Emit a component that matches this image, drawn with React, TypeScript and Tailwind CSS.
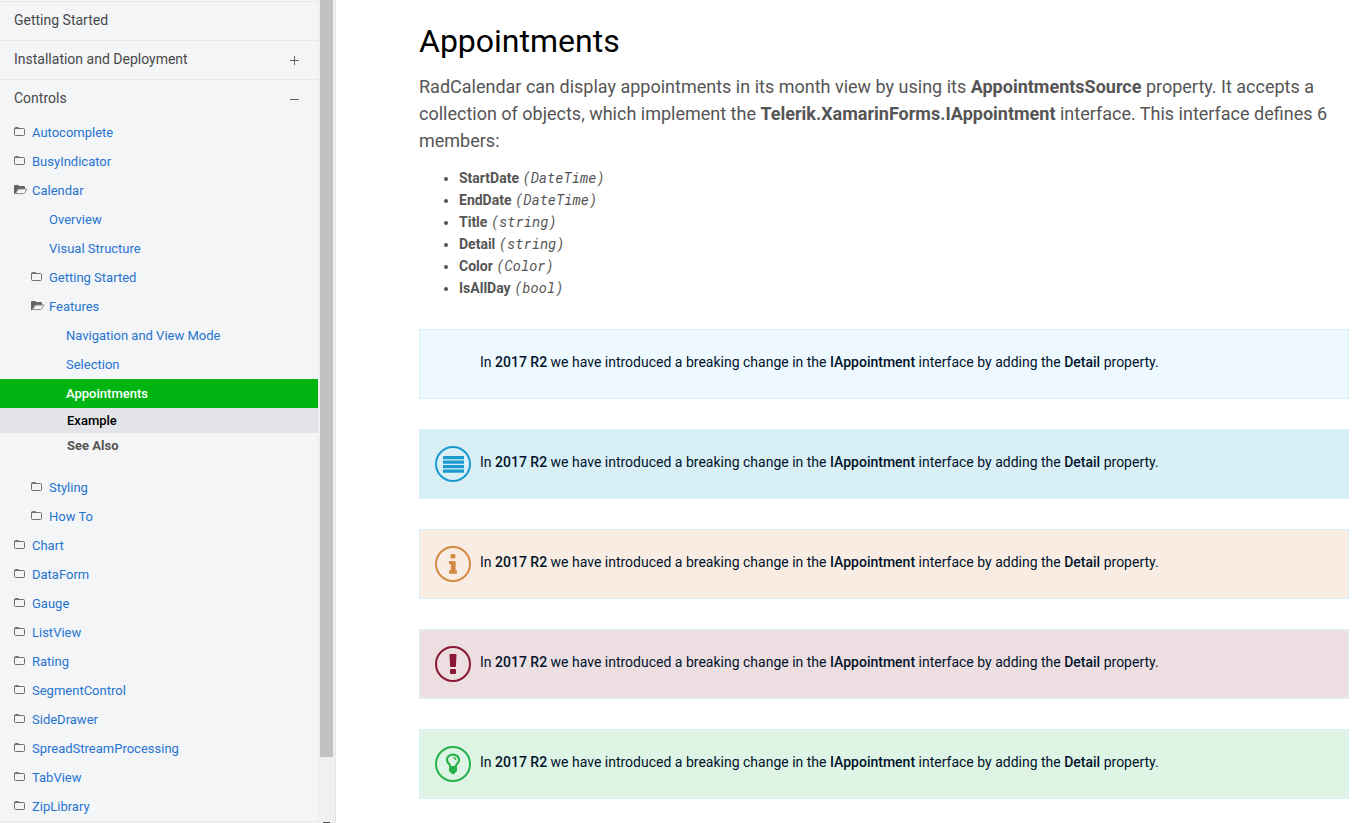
import type { ReactNode } from "react";

type Item = { label: string; level: 0 | 1 | 2; icon?: "closed" | "open"; active?: boolean };

const before: Item[] = [
  { label: "Autocomplete", level: 0, icon: "closed" },
  { label: "BusyIndicator", level: 0, icon: "closed" },
  { label: "Calendar", level: 0, icon: "open" },
  { label: "Overview", level: 1 },
  { label: "Visual Structure", level: 1 },
  { label: "Getting Started", level: 1, icon: "closed" },
  { label: "Features", level: 1, icon: "open" },
  { label: "Navigation and View Mode", level: 2 },
  { label: "Selection", level: 2 },
  { label: "Appointments", level: 2, active: true },
];

const after: Item[] = [
  { label: "Styling", level: 1, icon: "closed" },
  { label: "How To", level: 1, icon: "closed" },
  { label: "Chart", level: 0, icon: "closed" },
  { label: "DataForm", level: 0, icon: "closed" },
  { label: "Gauge", level: 0, icon: "closed" },
  { label: "ListView", level: 0, icon: "closed" },
  { label: "Rating", level: 0, icon: "closed" },
  { label: "SegmentControl", level: 0, icon: "closed" },
  { label: "SideDrawer", level: 0, icon: "closed" },
  { label: "SpreadStreamProcessing", level: 0, icon: "closed" },
  { label: "TabView", level: 0, icon: "closed" },
  { label: "ZipLibrary", level: 0, icon: "closed" },
];

const members = [
  ["StartDate", "DateTime"],
  ["EndDate", "DateTime"],
  ["Title", "string"],
  ["Detail", "string"],
  ["Color", "Color"],
  ["IsAllDay", "bool"],
];

const indent = { 0: "pl-[14px]", 1: "pl-[31px]", 2: "pl-[48px]" };

function FolderIcon({ open }: { open: boolean }) {
  return (
    <svg width="14" height="10" viewBox="0 0 14 10" aria-hidden="true" className="mb-0.5">
      {open ? (
        <>
          <path d="M0 8.5V1Q0 0 1 0h3.2l1 1H10q1 0 1 1v2H5Q4 4 3.5 4.800L.8 9.200Q0 9.200 0 8.500z" fill="#656565" />
          <path d="M4.600 4H13L10.600 8q-.4.6-1 .6H1.600z" fill="none" stroke="#858585" strokeWidth=".9" strokeLinejoin="round" />
        </>
      ) : (
        <path
          d="M.5 1.5q0-1 1-1h2.7q.6 0 .8 1h4.5q1 0 1 1v5q0 1-1 1h-8q-1 0-1-1zM.5 1.5H5"
          fill="none"
          stroke="#707070"
        />
      )}
    </svg>
  );
}

function NavItem({ item }: { item: Item }) {
  return (
    <li>
      <a
        href="#"
        className={`flex h-[29px] items-center ${indent[item.level]} ${
          item.active ? "bg-[#00b412] font-medium text-white" : "text-[#2774d0]"
        }`}
      >
        <span className="w-[18px] shrink-0">{item.icon && <FolderIcon open={item.icon === "open"} />}</span>
        {item.label}
      </a>
    </li>
  );
}

function Section({ label, sign }: { label: string; sign?: "plus" | "minus" }) {
  return (
    <button
      type="button"
      className="flex h-[39px] w-full items-center justify-between border-t border-[#e4e7eb] pr-[19px] pb-0.5 pl-[14px] text-left text-sm text-[#494949]"
    >
      {label}
      {sign && (
        <svg width="9" height="9" viewBox="0 0 9 9" aria-hidden="true" className="mt-0.5 overflow-visible">
          <path d={sign === "plus" ? "M0 4.5h9M4.5 0v9" : "M0 4.5h9"} stroke="#5f5f5f" fill="none" />
        </svg>
      )}
    </button>
  );
}

function Ring({ color, children }: { color: string; children: ReactNode }) {
  return (
    <svg width="36" height="36" viewBox="0 0 36 36" fill={color} aria-hidden="true">
      <circle cx="18" cy="18" r="17" fill="none" stroke={color} strokeWidth="2" />
      {children}
    </svg>
  );
}

const notes: { tone: string; icon: ReactNode }[] = [
  { tone: "bg-[#edf8ff]", icon: null },
  {
    tone: "bg-[#d9eff6]",
    icon: (
      <Ring color="#1c9ad0">
        <rect x="8" y="10" width="21" height="3.3" rx=".5" />
        <rect x="8" y="14.5" width="21" height="3.3" rx=".5" />
        <rect x="8" y="19" width="21" height="3.3" rx=".5" />
        <rect x="8" y="23.5" width="21" height="3.3" rx=".5" />
      </Ring>
    ),
  },
  {
    tone: "bg-[#f9ede3]",
    icon: (
      <Ring color="#d28a44">
        <rect x="15.5" y="8" width="5" height="4.5" rx="1.5" />
        <path d="M14.7 15h5.1q.8 0 .8.8v8.4h.6q.8 0 .8.8v2q0 .8-.8.8h-6.4q-.8 0-.8-.8v-2q0-.8.8-.8h1v-6h-1.1q-.7 0-.7-.8v-1.6q0-.8.7-.8z" />
      </Ring>
    ),
  },
  {
    tone: "bg-[#eddee1]",
    icon: (
      <Ring color="#8a1735">
        <path d="M15.3 8h5.4q.9 0 .8.9l-.6 11.3q0 .8-.8.8h-4.2q-.8 0-.8-.8l-.6-11.3q-.1-.9.8-.9z" />
        <rect x="15" y="23" width="6" height="5" rx="1" />
      </Ring>
    ),
  },
  {
    tone: "bg-[#def4e4]",
    icon: (
      <Ring color="#28b24b">
        <path
          d="M15.5 21c0-2.8-3.6-4-3.6-7.2a6.1 5.2 0 0 1 12.2 0c0 3.2-3.6 4.4-3.6 7.2z"
          fill="none"
          stroke="#28b24b"
          strokeWidth="2.2"
        />
        <path d="M18.3 11.5q2.2.3 2.6 2.3" fill="none" stroke="#28b24b" strokeWidth="1.4" />
        <path d="M14 20.5h8v4.5l-1.8 1.8q-.4 1.4-2.2 1.4t-2.2-1.4L14 25z" />
      </Ring>
    ),
  },
];

export default function App() {
  return (
    <div className="flex h-screen overflow-hidden bg-white font-['Roboto',sans-serif] text-[#555]">
      <aside className="flex w-[336px] shrink-0 border-r border-[#e4e7eb] bg-[#f3f5f7]">
        <nav className="min-w-0 flex-1 pt-px text-[13px]" aria-label="Documentation">
          <Section label="Getting Started" />
          <Section label="Installation and Deployment" sign="plus" />
          <Section label="Controls" sign="minus" />
          <ul className="border-b border-[#e4e7eb]">
            {before.map((item) => (
              <NavItem key={item.label} item={item} />
            ))}
            <li className="pb-[15px] font-medium">
              <a href="#example" className="flex h-[25px] items-center bg-[#e2e4e8] pl-[67px] text-black">
                Example
              </a>
              <a href="#see-also" className="flex h-[25px] items-center pl-[67px] font-bold">
                See Also
              </a>
            </li>
            {after.map((item) => (
              <NavItem key={item.label} item={item} />
            ))}
          </ul>
        </nav>
        <div className="flex w-[17px] flex-col items-center justify-between bg-[#f0f0f0]" aria-hidden="true">
          <div className="h-[92%] w-[13px] bg-[#c1c1c1]" />
          <div className="h-px w-[7px] bg-[#505050]" />
        </div>
      </aside>
      <main className="min-w-0 flex-1 pt-[22px] pr-[21px] pl-[83px]">
        <h1 className="text-[32px] leading-[38px] text-black">Appointments</h1>
        <p className="mt-[13px] text-lg leading-[27px]">
          RadCalendar can display appointments in its month view by using its <strong>AppointmentsSource</strong>{" "}
          property. It accepts a collection of objects, which implement the{" "}
          <strong>Telerik.XamarinForms.IAppointment</strong> interface. This interface defines 6 members:
        </p>
        <ul className="mt-[13px] mb-[30px] list-disc pl-10 text-sm leading-[22px]">
          {members.map(([name, type]) => (
            <li key={name}>
              <strong>{name}</strong>{" "}
              <em className="font-['Roboto_Mono','Liberation_Mono',monospace]">({type})</em>
            </li>
          ))}
        </ul>
        <div className="flex flex-col gap-[30px]">
          {notes.map(({ tone, icon }) => (
            <div key={tone} className={`flex h-[70px] items-center border border-[#d9f0fd] pl-[15px] text-sm text-[#00132b] ${tone}`}>
              <div className="w-[45px] shrink-0">{icon}</div>
              <p className="pb-1">
                In <strong className="font-medium">2017 R2</strong> we have introduced a breaking change in the{" "}
                <strong className="font-medium">IAppointment</strong> interface by adding the{" "}
                <strong className="font-medium">Detail</strong> property.
              </p>
            </div>
          ))}
        </div>
      </main>
    </div>
  );
}
